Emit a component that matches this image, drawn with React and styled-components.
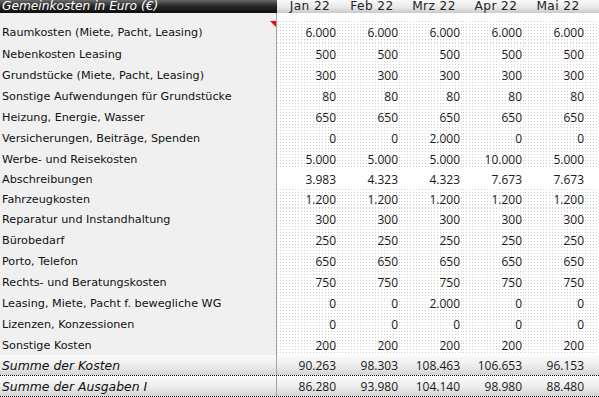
import React from 'react';
import styled, { createGlobalStyle } from 'styled-components';

const GlobalStyle = createGlobalStyle`
  html, body {
    margin: 0;
    padding: 0;
    background: #ffffff;
  }
  body {
    width: 599px;
    height: 397px;
    overflow: hidden;
  }
`;

const months = ['Jan 22', 'Feb 22', 'Mrz 22', 'Apr 22', 'Mai 22'];

const rows = [
  { label: 'Raumkosten (Miete, Pacht, Leasing)', values: ['6.000', '6.000', '6.000', '6.000', '6.000'], height: 22, note: true },
  { label: 'Nebenkosten Leasing', values: ['500', '500', '500', '500', '500'] },
  { label: 'Grundstücke (Miete, Pacht, Leasing)', values: ['300', '300', '300', '300', '300'] },
  { label: 'Sonstige Aufwendungen für Grundstücke', values: ['80', '80', '80', '80', '80'] },
  { label: 'Heizung, Energie, Wasser', values: ['650', '650', '650', '650', '650'] },
  { label: 'Versicherungen, Beiträge, Spenden', values: ['0', '0', '2.000', '0', '0'] },
  { label: 'Werbe- und Reisekosten', values: ['5.000', '5.000', '5.000', '10.000', '5.000'] },
  { label: 'Abschreibungen', values: ['3.983', '4.323', '4.323', '7.673', '7.673'], height: 20, plain: true },
  { label: 'Fahrzeugkosten', values: ['1.200', '1.200', '1.200', '1.200', '1.200'], height: 19 },
  { label: 'Reparatur und Instandhaltung', values: ['300', '300', '300', '300', '300'] },
  { label: 'Bürobedarf', values: ['250', '250', '250', '250', '250'] },
  { label: 'Porto, Telefon', values: ['650', '650', '650', '650', '650'] },
  { label: 'Rechts- und Beratungskosten', values: ['750', '750', '750', '750', '750'] },
  { label: 'Leasing, Miete, Pacht f. bewegliche WG', values: ['0', '0', '2.000', '0', '0'] },
  { label: 'Lizenzen, Konzessionen', values: ['0', '0', '0', '0', '0'] },
  { label: 'Sonstige Kosten', values: ['200', '200', '200', '200', '200'] },
];

const totals = [
  { label: 'Summe der Kosten', values: ['90.263', '98.303', '108.463', '106.653', '96.153'] },
  { label: 'Summe der Ausgaben I', values: ['86.280', '93.980', '104.140', '98.980', '88.480'] },
];

const labelFont = `'DejaVu Sans', 'Noto Sans', sans-serif`;
const numberFont = `'Open Sans', 'Noto Sans', sans-serif`;

const Sheet = styled.div`
  width: 599px;
  height: 397px;
  display: flex;
  flex-direction: column;
  overflow: hidden;
  background: #ffffff;
`;

const Row = styled.div`
  display: grid;
  grid-template-columns: 277px repeat(5, 62px) 1fr;
  height: ${(p) => p.$h}px;
  flex-shrink: 0;
  box-sizing: border-box;
`;

const HeadTitle = styled.div`
  background: linear-gradient(#6a6a6a 0%, #2a2a2a 45%, #0d0d0d 100%);
  color: #ffffff;
  font-family: ${labelFont};
  font-style: italic;
  font-size: 12.2px;
  line-height: 13px;
  padding-left: 2px;
  white-space: nowrap;
`;

const HeadMonth = styled.div`
  background: linear-gradient(#fbfbfb 0%, #e6e6e6 60%, #c9c9c9 100%);
  color: #222;
  font-family: ${labelFont};
  font-size: 12.2px;
  letter-spacing: 0.4px;
  line-height: 13px;
  text-align: center;
  white-space: nowrap;
  padding-left: 4px;
`;

const HeadFill = styled.div`
  background: linear-gradient(#fbfbfb 0%, #e6e6e6 60%, #c9c9c9 100%);
`;

const totalBg = 'linear-gradient(#fbfbfb 0%, #eeeeee 50%, #d4d4d4 100%)';

const Label = styled.div`
  position: relative;
  background: ${(p) => (p.$total ? totalBg : '#f0f0f0')};
  border-right: 1px solid #a3a3a3;
  font-family: ${labelFont};
  font-size: ${(p) => (p.$total ? '12.4px' : '11.2px')};
  font-style: ${(p) => (p.$total ? 'italic' : 'normal')};
  color: #111;
  display: flex;
  align-items: center;
  padding-left: 2px;
  padding-top: 1px;
  white-space: nowrap;
  overflow: hidden;
  box-sizing: border-box;
`;

const Note = styled.span`
  position: absolute;
  top: 0;
  right: 0;
  width: 0;
  height: 0;
  border-top: 6px solid #ff0000;
  border-left: 6px solid transparent;
`;

const dots = `
  background-color: #ffffff;
  background-image: conic-gradient(at 1px 1px, transparent 75%, #d2d2d2 0);
  background-size: 3px 3px;
`;

const Value = styled.div`
  ${(p) => (p.$total ? `background: ${totalBg};` : p.$plain ? 'background: #ffffff;' : dots)}
  font-family: ${numberFont};
  font-size: 12px;
  color: #1a1a1a;
  display: flex;
  align-items: center;
  justify-content: flex-end;
  padding-right: 3px;
  padding-top: 1px;
  box-sizing: border-box;
`;

const Blank = styled.div`
  grid-column: 2 / -1;
  background: #ffffff;
`;

const TotalRow = styled(Row)`
  border-bottom: 1px dotted #000;
`;

function App() {
  return (
    <Sheet>
      <GlobalStyle />
      <Row $h={13}>
        <HeadTitle>Gemeinkosten in Euro (€)</HeadTitle>
        {months.map((m) => (
          <HeadMonth key={m}>{m}</HeadMonth>
        ))}
        <HeadFill />
      </Row>
      <Row $h={8}>
        <Label />
        <Blank />
      </Row>
      {rows.map((r) => (
        <Row key={r.label} $h={r.height || 21}>
          <Label>
            {r.label}
            {r.note && <Note />}
          </Label>
          {r.values.map((v, i) => (
            <Value key={i} $plain={r.plain}>
              {v}
            </Value>
          ))}
          <Value $plain={r.plain} />
        </Row>
      ))}
      {totals.map((r) => (
        <TotalRow key={r.label} $h={21}>
          <Label $total>{r.label}</Label>
          {r.values.map((v, i) => (
            <Value key={i} $total>
              {v}
            </Value>
          ))}
          <Value $total />
        </TotalRow>
      ))}
    </Sheet>
  );
}

export default App;
